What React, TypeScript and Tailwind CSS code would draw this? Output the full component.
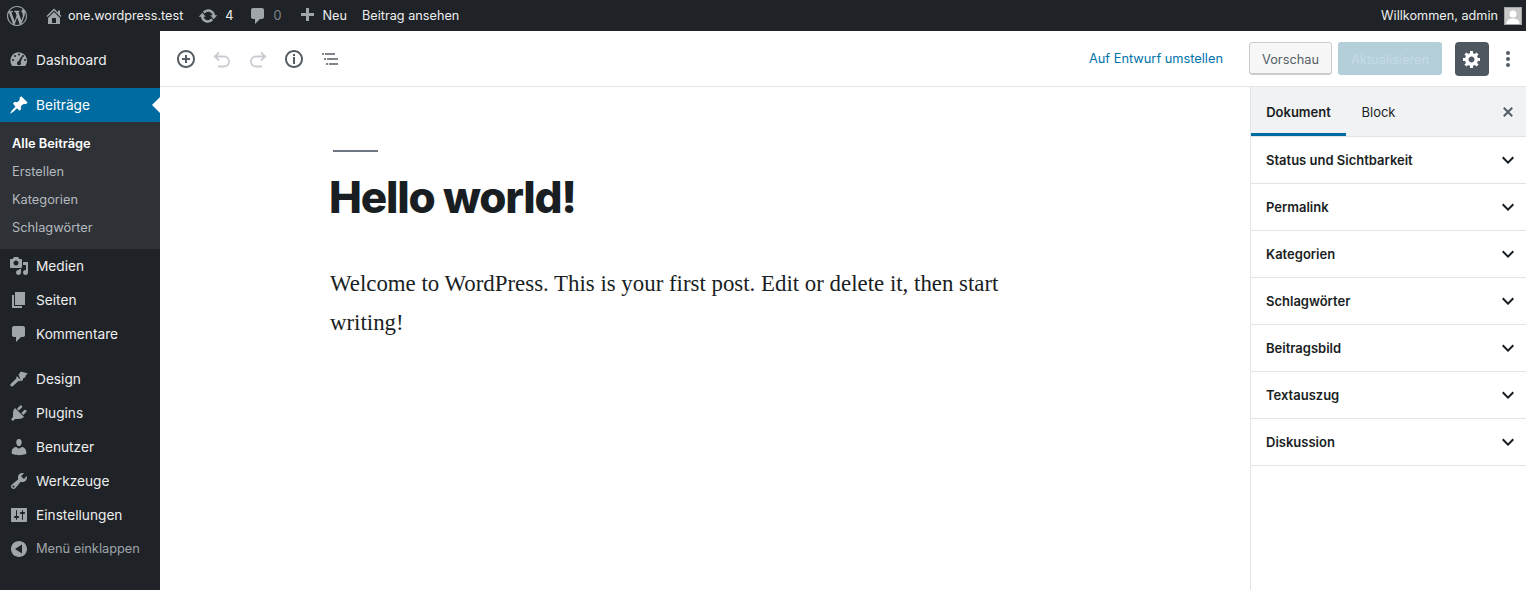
import React from "react";

const Dash = ({ d, className = "" }: { d: string; className?: string }) => (
  <svg viewBox="0 0 20 20" width="20" height="20" className={className} fill="currentColor" fillRule="evenodd"><path d={d} /></svg>
);

const I = {
  wp: "M20 10c0-5.510-4.490-10-10-10C4.480 0 0 4.490 0 10c0 5.520 4.480 10 10 10 5.510 0 10-4.480 10-10zM7.780 15.370L4.370 6.220c.55-.02 1.170-.08 1.170-.08.5-.06.44-1.130-.06-1.110 0 0-1.450.11-2.370.11-.18 0-.37 0-.58-.01C4.120 2.690 6.890 1.050 10 1.050c2.320 0 4.430.88 6.020 2.350-.67-.11-1.630.39-1.630 1.560 0 .73.44 1.340.89 2.070.35.610.55 1.360.55 2.460 0 1.490-1.400 5-1.400 5l-3.030-8.370c.54-.02.820-.17.820-.17.5-.05.44-1.250-.06-1.220 0 0-1.440.12-2.380.12-.87 0-2.330-.12-2.330-.12-.5-.03-.56 1.200-.06 1.220l.92.080 1.260 3.410zM17.410 10c.24-.64.74-1.870.43-4.250.7 1.290 1.050 2.710 1.050 4.250 0 3.290-1.730 6.240-4.400 7.780.97-2.590 1.940-5.200 2.920-7.780zM6.100 18.090C3.120 16.650 1.110 13.530 1.110 10c0-1.300.23-2.480.72-3.590C3.250 10.300 4.670 14.200 6.100 18.090zm4.030-6.630l2.580 6.980c-.86.29-1.760.45-2.710.45-.79 0-1.570-.11-2.290-.33.81-2.380 1.620-4.740 2.420-7.100z",
  home: "M16 8.500l1.530 1.530-1.060 1.060L10 4.620l-6.470 6.470-1.060-1.060L10 2.500l4 4v-2h2v4zm-6-2.460l6 5.990V18H4v-5.970zM12 17v-5H8v5h4z",
  sync: "M10.200 3.280c3.530 0 6.430 2.610 6.920 6h2.080l-3.500 4-3.500-4h2.320c-.45-1.970-2.210-3.440-4.320-3.440-1.450 0-2.730.71-3.540 1.790L4.950 5.650c1.280-1.450 3.150-2.370 5.250-2.370zm-.4 13.440c-3.520 0-6.430-2.610-6.920-6H.8l3.500-4c1.170 1.330 2.330 2.670 3.500 4H5.480c.45 1.970 2.210 3.440 4.320 3.440 1.450 0 2.730-.71 3.540-1.790l1.710 1.980c-1.280 1.450-3.150 2.370-5.250 2.370z",
  comment: "M5 2h9c1.100 0 2 .9 2 2v7c0 1.100-.9 2-2 2h-2l-5 5v-5H5c-1.100 0-2-.9-2-2V4c0-1.100.9-2 2-2z",
  plus: "M17 7v3h-5v5H9v-5H4V7h5V2h3v5h5z",
  dash: "M3.760 16h12.480c1.100-1.430 1.760-3.210 1.760-5.140 0-4.710-3.820-8.530-8.530-8.530S1.470 6.150 1.470 10.860c0 1.930.66 3.710 1.760 5.140zM10 3.500a1 1 0 110 2 1 1 0 010-2zM6 5a1 1 0 110 2 1 1 0 010-2zm8 0a1 1 0 110 2 1 1 0 010-2zM4 9a1 1 0 110 2 1 1 0 010-2zm12 0a1 1 0 110 2 1 1 0 010-2zm-2.200-2l-2.300 5.100c.3.3.5.7.5 1.150a2 2 0 11-2.500-1.900L12.300 6.500z",
  pin: "M10.440 3.020l1.820-1.820 6.360 6.350-1.830 1.820c-1.050-.68-2.480-.57-3.410.36l-.75.75c-.92.93-1.040 2.350-.35 3.410l-1.830 1.820-2.410-2.410-2.800 2.790c-.42.420-3.380 2.710-3.800 2.290s1.860-3.390 2.280-3.810l2.790-2.790L3.960 8.620l1.820-1.830c1.060.68 2.480.57 3.410-.36l.75-.75c.93-.92 1.050-2.340.5-3.660z",
  media: "M13 11V4c0-.55-.45-1-1-1h-1.670L9 1H5L3.670 3H2c-.55 0-1 .45-1 1v7c0 .55.45 1 1 1h10c.55 0 1-.45 1-1zM7 4.500c1.380 0 2.500 1.120 2.500 2.500S8.380 9.500 7 9.500 4.500 8.380 4.500 7 5.620 4.500 7 4.500zM14 6h5v10.500c0 1.380-1.120 2.500-2.500 2.500S14 17.880 14 16.500s1.120-2.500 2.500-2.500c.17 0 .34.02.5.05V9h-3V6zm-4 8.050V13h2v3.500c0 1.380-1.120 2.500-2.500 2.500S7 17.880 7 16.500 8.120 14 9.500 14c.17 0 .34.02.5.05z",
  pages: "M6 15V2h10v13H6zm-1 1h8v2H3V5h2v11z",
  brush: "M9.500 5.500L12 2.500l7 2-2 1.500-1 2.500-1.500.5-1 2.500-1.500.5zM7.700 7l4.300 4.300-1 .9-1.500-.2-5.500 4.900c-.8.7-1.700.7-2.300.1s-.5-1.500.2-2.200l5.400-5.200z",
  plug: "M13.110 4.360L9.870 7.600 8 5.730l3.240-3.240c.35-.34 1.050-.2 1.560.32.520.51.660 1.210.31 1.550zm-8 1.770l.910-1.120 9.010 9.010-1.190.84c-.71.710-2.630 1.160-3.820 1.160H6.140L4.900 17.260c-.59.59-1.540.59-2.120 0a1.490 1.490 0 010-2.120l1.240-1.240v-3.880c0-1.130.4-3.100 1.090-3.890zm7.260 3.970l3.240-3.240c.34-.35 1.040-.21 1.550.31.520.51.660 1.210.31 1.550l-3.240 3.250z",
  user: "M10 9.250c-2.270 0-2.730-3.440-2.730-3.440C7 4.020 7.820 2 9.970 2c2.160 0 2.980 2.020 2.710 3.810 0 0-.41 3.440-2.680 3.440zm0 2.570L12.720 10c2.390 0 4.520 2.330 4.520 4.530v2.490s-3.650 1.130-7.240 1.130c-3.650 0-7.240-1.130-7.240-1.130v-2.490c0-2.250 1.940-4.480 4.470-4.480z",
  wrench: "M16.680 9.770c-1.340 1.340-3.300 1.670-4.950.99l-5.410 6.520c-.99.990-2.590.99-3.580 0s-.99-2.590 0-3.570l6.520-5.420c-.68-1.650-.35-3.610.99-4.950 1.280-1.280 3.120-1.620 4.720-1.060l-2.890 2.890 2.820 2.820 2.860-2.870c.53 1.590.19 3.420-1.080 4.650zM3.810 16.210c.4.390 1.030.39 1.420 0 .4-.4.400-1.030 0-1.430-.39-.39-1.020-.39-1.420 0a1.010 1.010 0 000 1.430z",
  settings: "M18 16V4c0-.55-.45-1-1-1H3c-.55 0-1 .45-1 1v12c0 .55.45 1 1 1h14c.55 0 1-.45 1-1zM8 11h1c.55 0 1 .45 1 1s-.45 1-1 1H8v1.500c0 .28-.22.5-.5.5s-.5-.22-.5-.5V13H6c-.55 0-1-.45-1-1s.45-1 1-1h1V5.500c0-.28.22-.5.5-.5s.5.220.5.500V11zm5-2h-1c-.55 0-1-.45-1-1s.45-1 1-1h1V5.500c0-.28.22-.5.5-.5s.5.220.5.500V7h1c.55 0 1 .45 1 1s-.45 1-1 1h-1v5.500c0 .28-.22.5-.5.5s-.5-.22-.5-.5V9z",
  collapse: "M18 10c0-4.420-3.580-8-8-8s-8 3.580-8 8 3.580 8 8 8 8-3.580 8-8zm-5-4.500v9L6 10z",
};

const Item = ({ icon, label, active, dim }: { icon: string; label: string; active?: boolean; dim?: boolean }) => (
  <div className={`relative flex h-[34px] items-center ${active ? "bg-[#006ba1] text-white" : dim ? "text-[#a0a5aa]" : "text-[#eeeeee]"}`}>
    <div className={`flex w-[36px] justify-center pl-px ${active ? "text-white" : "text-[#a0a5aa]"}`}>
      <Dash d={icon} />
    </div>
    <span className={dim ? "text-[12.8px]" : "text-[13.7px]"}>{label}</span>
    {active && <div className="absolute right-0 top-[9px] h-0 w-0 border-y-[8px] border-r-[8px] border-y-transparent border-r-white" />}
  </div>
);

const Panel = ({ label }: { label: string }) => (
  <div className="flex h-[47px] items-center justify-between border-b border-[#e2e4e7] pl-[15px] pr-[6px] text-[13px] font-semibold text-[#191e23]">
    <span className="pt-[2px]">{label}</span>
    <svg viewBox="0 0 24 24" width="24" height="24" fill="currentColor"><path d="M7.410 8.590L12 13.170l4.590-4.580L18 10l-6 6-6-6z" /></svg>
  </div>
);

const hookStroke = { fill: "none", strokeWidth: 1.8 };

export default function App() {
  return (
    <div className="flex h-[590px] w-[1526px] flex-col overflow-hidden bg-white font-['Inter','Liberation_Sans',sans-serif] antialiased">
      <header className="flex h-[31px] shrink-0 items-center bg-[#1f2327] pl-[7px] pr-[4px] text-[12.7px] text-[#eeeeee]">
        <Dash d={I.wp} className="text-[#a0a5aa]" />
        <div className="ml-[17px] flex items-center gap-[4px]"><Dash d={I.home} className="text-[#a0a5aa]" /><span>one.wordpress.test</span></div>
        <div className="ml-[15px] flex items-center gap-[7px]"><Dash d={I.sync} className="text-[#a0a5aa]" /><span>4</span></div>
        <div className="ml-[14px] flex items-center gap-[6px]"><Dash d={I.comment} className="text-[#a0a5aa]" /><span className="text-[#82878c]">0</span></div>
        <div className="ml-[15px] flex items-center gap-[6px]"><Dash d={I.plus} className="text-[#a0a5aa]" /><span>Neu</span></div>
        <span className="ml-[15px]">Beitrag ansehen</span>
        <span className="ml-auto">Willkommen, admin</span>
        <div className="ml-[6px] flex h-[18px] w-[18px] items-end justify-center overflow-hidden border border-[#a0a5aa] bg-[#c8c8c8]">
          <svg viewBox="0 0 16 16" width="16" height="16" fill="#fff"><circle cx="8" cy="6" r="3.500" /><path d="M1.500 16c0-4 3-5.500 6.500-5.500s6.500 1.500 6.500 5.500z" /></svg>
        </div>
      </header>
      <div className="flex min-h-0 flex-1">
        <aside className="w-[160px] shrink-0 bg-[#1f2327] pt-[12px]">
          <Item icon={I.dash} label="Dashboard" />
          <div className="h-[11px]" />
          <Item icon={I.pin} label="Beiträge" active />
          <div className="flex h-[127px] flex-col justify-center bg-[#2e3237] pl-[12px] text-[12.8px] text-[#b4b9be]">
            <div className="flex h-[28px] items-center font-semibold text-white">Alle Beiträge</div>
            <div className="flex h-[28px] items-center">Erstellen</div>
            <div className="flex h-[28px] items-center">Kategorien</div>
            <div className="flex h-[28px] items-center">Schlagwörter</div>
          </div>
          <Item icon={I.media} label="Medien" />
          <Item icon={I.pages} label="Seiten" />
          <Item icon={I.comment} label="Kommentare" />
          <div className="h-[11px]" />
          <Item icon={I.brush} label="Design" />
          <Item icon={I.plug} label="Plugins" />
          <Item icon={I.user} label="Benutzer" />
          <Item icon={I.wrench} label="Werkzeuge" />
          <Item icon={I.settings} label="Einstellungen" />
          <Item icon={I.collapse} label="Menü einklappen" dim />
        </aside>
        <div className="flex min-w-0 flex-1 flex-col">
          <div className="flex h-[56px] shrink-0 items-center border-b border-[#e2e4e7] pl-[14px] pr-[6px]">
            <div className="flex items-center gap-[12px] text-[#555d66]">
              <svg viewBox="0 0 24 24" width="24" height="24" fill="currentColor"><path d="M10 1c-5 0-9 4-9 9s4 9 9 9 9-4 9-9-4-9-9-9zm0 16c-3.900 0-7-3.100-7-7s3.100-7 7-7 7 3.100 7 7-3.100 7-7 7zm1-11H9v3H6v2h3v3h2v-3h3V9h-3V6z" transform="translate(2 2)" /></svg>
              <svg viewBox="0 0 24 24" width="24" height="24" stroke="#c8cbcf" {...hookStroke}><path d="M9 5.500L4.800 9.500 9 13.500M4.800 9.500H14a5 5 0 010 10H8" /></svg>
              <svg viewBox="0 0 24 24" width="24" height="24" stroke="#c8cbcf" {...hookStroke}><path d="M15 5.500l4.200 4-4.200 4M19.200 9.500H10a5 5 0 000 10h6" /></svg>
              <svg viewBox="0 0 24 24" width="24" height="24" fill="currentColor"><path d="M10 1c-5 0-9 4-9 9s4 9 9 9 9-4 9-9-4-9-9-9zm0 16c-3.900 0-7-3.100-7-7s3.100-7 7-7 7 3.100 7 7-3.100 7-7 7zm1-9H9v7h2zm0-3H9v2h2z" transform="translate(2 2)" /></svg>
              <svg viewBox="0 0 24 24" width="24" height="24" fill="currentColor"><path d="M4 6.300h2v1.500H4zM7 6.300h10v1.500H7zM6 11.300h2v1.500H6zm3 0h11v1.500H9zM8 16.300h2v1.500H8zm3 0h9v1.500h-9z" /></svg>
            </div>
            <span className="ml-auto text-[12.8px] text-[#0073aa]">Auf Entwurf umstellen</span>
            <button className="ml-[26px] h-[33px] w-[83px] rounded-[3px] border border-[#cccccc] bg-[#f7f7f7] pt-[2px] text-[12.8px] text-[#555d66] shadow-[inset_0_-1px_0_#cccccc]">Vorschau</button>
            <button className="ml-[6px] h-[33px] w-[104px] rounded-[3px] bg-[#b5cfda] pt-[2px] text-[12.8px] text-[#c5dbe5]">Aktualisieren</button>
            <div className="ml-[13px] flex h-[34px] w-[34px] items-center justify-center rounded-[4px] bg-[#4f5760] text-white">
              <svg viewBox="0 0 20 20" width="20" height="20" fill="currentColor"><path d="M18 12h-2.180c-.17.7-.44 1.350-.81 1.930l1.540 1.540-2.100 2.100-1.540-1.540c-.58.360-1.230.64-1.910.81V19H8v-2.180c-.68-.17-1.330-.45-1.910-.81l-1.540 1.540-2.120-2.120 1.540-1.540c-.36-.58-.64-1.230-.81-1.890H1V9h2.180c.170-.7.450-1.350.810-1.930L2.450 5.530l2.100-2.100 1.540 1.540c.58-.370 1.230-.64 1.910-.81V2h3v2.180c.68.170 1.330.440 1.910.810l1.540-1.540 2.120 2.120-1.540 1.540c.360.580.640 1.230.810 1.890H18v3zm-8.500 1.500c1.660 0 3-1.340 3-3s-1.340-3-3-3-3 1.340-3 3 1.340 3 3 3z" /></svg>
            </div>
            <svg className="ml-[7px] text-[#555d66]" viewBox="0 0 24 24" width="24" height="24" fill="currentColor"><circle cx="12" cy="6" r="2" /><circle cx="12" cy="12" r="2" /><circle cx="12" cy="18" r="2" /></svg>
          </div>
          <div className="flex min-h-0 flex-1">
            <main className="min-w-0 flex-1 pl-[170px]">
              <div className="ml-[3px] mt-[63px] h-[2px] w-[45px] bg-[#6c7781]" />
              <h1 className="-ml-px mt-[18px] text-[44px] font-extrabold leading-[54px] tracking-[-1.2px] text-[#191e23]">Hello world!</h1>
              <p className="mt-[40px] w-[690px] font-['Liberation_Serif',serif] text-[22.87px] leading-[39px] text-[#191e23]">Welcome to WordPress. This is your first post. Edit or delete it, then start writing!</p>
            </main>
            <aside className="w-[276px] shrink-0 border-l border-[#e2e4e7]">
              <div className="flex h-[50px] items-center justify-between border-b border-[#e2e4e7] bg-[#f1f2f4] pr-[8px] text-[13px] text-[#191e23]">
                <div className="flex h-full">
                  <div className="flex w-[95px] items-center justify-center border-b-[3px] border-[#006ba1] pt-[5px] font-semibold">Dokument</div>
                  <div className="flex w-[65px] items-center justify-center pt-[3px]">Block</div>
                </div>
                <svg className="text-[#555d66]" viewBox="0 0 20 20" width="20" height="20" fill="currentColor"><path d="M14.950 6.460L11.410 10l3.540 3.540-1.410 1.410L10 11.420l-3.530 3.530-1.420-1.420L8.580 10 5.050 6.470l1.420-1.420L10 8.580l3.540-3.530z" /></svg>
              </div>
              {["Status und Sichtbarkeit", "Permalink", "Kategorien", "Schlagwörter", "Beitragsbild", "Textauszug", "Diskussion"].map((p) => <Panel key={p} label={p} />)}
            </aside>
          </div>
        </div>
      </div>
    </div>
  );
}
